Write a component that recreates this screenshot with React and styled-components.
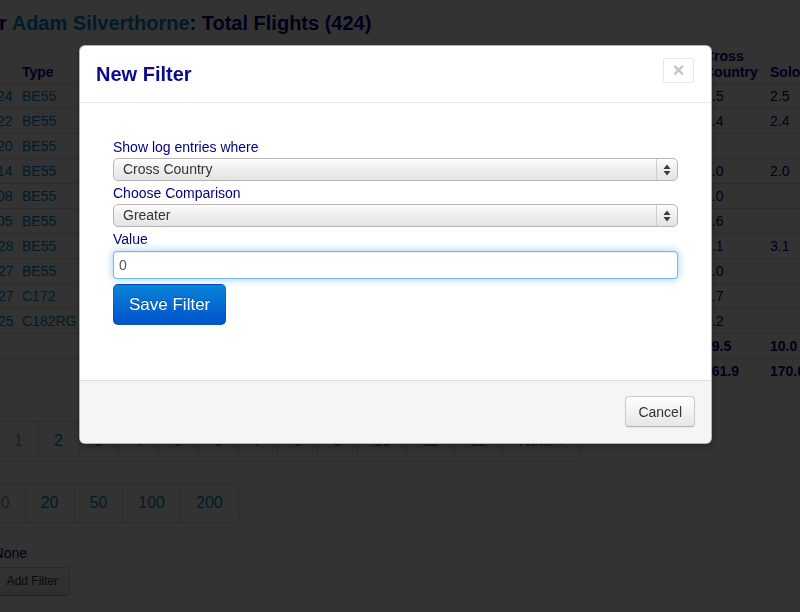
import React from "react";
import styled, { createGlobalStyle } from "styled-components";

const flights = [
  { date: "2013-11-24", type: "BE55", tail: "N4417J", route: "KCRQ KIPL KCRQ", total: "2.5", xc: "2.5", solo: "2.5" },
  { date: "2013-11-22", type: "BE55", tail: "N4417J", route: "KCRQ KTRM KCRQ", total: "2.4", xc: "2.4", solo: "2.4" },
  { date: "2013-11-20", type: "BE55", tail: "N4417J", route: "KCRQ", total: "1.3", xc: "", solo: "" },
  { date: "2013-11-14", type: "BE55", tail: "N4417J", route: "KCRQ KBLH KCRQ", total: "2.0", xc: "2.0", solo: "2.0" },
  { date: "2013-11-08", type: "BE55", tail: "N4417J", route: "KCRQ KSBD", total: "1.0", xc: "1.0", solo: "" },
  { date: "2013-11-05", type: "BE55", tail: "N4417J", route: "KCRQ KIPL KCRQ", total: "1.6", xc: "1.6", solo: "" },
  { date: "2013-10-28", type: "BE55", tail: "N4417J", route: "KCRQ KPSP KCRQ", total: "3.1", xc: "3.1", solo: "3.1" },
  { date: "2013-10-27", type: "BE55", tail: "N4417J", route: "KCRQ KSEE", total: "1.0", xc: "1.0", solo: "" },
  { date: "2013-10-27", type: "C172", tail: "N52233", route: "KSEE KRNM", total: "0.7", xc: "0.7", solo: "" },
  { date: "2013-10-25", type: "C182RG", tail: "N9398R", route: "KCRQ KOKB", total: "1.2", xc: "1.2", solo: "" },
];

const colWidths = [80, 70, 84, 230, 70, 70, 70, 88, 66, 66];

export default function App() {
  return (
    <>
      <GlobalStyle />
      <Page>
        <Heading>
          Log for <Link>Adam Silverthorne</Link>: Total Flights (424)
        </Heading>

        <Table>
          <colgroup>
            {colWidths.map((w, i) => (
              <col key={i} style={{ width: w }} />
            ))}
          </colgroup>
          <thead>
            <tr>
              <Th>Date</Th>
              <Th>Type</Th>
              <Th>Tail</Th>
              <Th>Route</Th>
              <Th>Total</Th>
              <Th>PIC</Th>
              <Th>Dual</Th>
              <Th>Night</Th>
              <Th>Cross Country</Th>
              <Th>Solo</Th>
            </tr>
          </thead>
          <tbody>
            {flights.map((f, i) => (
              <tr key={i}>
                <Td><Link>{f.date}</Link></Td>
                <Td><Link>{f.type}</Link></Td>
                <Td>{f.tail}</Td>
                <Td>{f.route}</Td>
                <Td>{f.total}</Td>
                <Td>{f.total}</Td>
                <Td></Td>
                <Td></Td>
                <Td>{f.xc}</Td>
                <Td>{f.solo}</Td>
              </tr>
            ))}
            <tr>
              <Td colSpan={4}></Td>
              <Td $bold>18.8</Td>
              <Td $bold>18.8</Td>
              <Td $bold></Td>
              <Td $bold></Td>
              <Td $bold>29.5</Td>
              <Td $bold>10.0</Td>
            </tr>
            <tr>
              <Td colSpan={4}></Td>
              <Td $bold>512.4</Td>
              <Td $bold>388.2</Td>
              <Td $bold>124.2</Td>
              <Td $bold>31.6</Td>
              <Td $bold>161.9</Td>
              <Td $bold>170.0</Td>
            </tr>
          </tbody>
        </Table>

        <Pager $top={37} $height={41}>
          <PagerItem $disabled>First</PagerItem>
          <PagerItem $disabled>1</PagerItem>
          {[2, 3, 4, 5, 6, 7, 8, 9, 10, 11, 12].map(n => (
            <PagerItem key={n}>{n}</PagerItem>
          ))}
          <PagerItem>Next »</PagerItem>
        </Pager>

        <Pager $top={22} $height={39}>
          {[5, 10, 20, 50, 100, 200].map(n => (
            <PagerItem key={n} $disabled={n === 10}>{n}</PagerItem>
          ))}
        </Pager>

        <FilterLine>Filter by: None</FilterLine>
        <ButtonRow>
          <SmallButton>Clear</SmallButton>
          <SmallButton>Add Filter</SmallButton>
        </ButtonRow>
      </Page>

      <Backdrop />

      <Modal>
        <ModalHeader>
          <ModalTitle>New Filter</ModalTitle>
          <CloseButton>×</CloseButton>
        </ModalHeader>
        <ModalBody>
          <Label>Show log entries where</Label>
          <Select>
            <SelectValue>Cross Country</SelectValue>
            <SelectArrows><Arrows /></SelectArrows>
          </Select>
          <Label>Choose Comparison</Label>
          <Select>
            <SelectValue>Greater</SelectValue>
            <SelectArrows><Arrows /></SelectArrows>
          </Select>
          <Label>Value</Label>
          <TextInput defaultValue="0" />
          <PrimaryButton>Save Filter</PrimaryButton>
        </ModalBody>
        <ModalFooter>
          <Button>Cancel</Button>
        </ModalFooter>
      </Modal>
    </>
  );
}

function Arrows() {
  return (
    <svg width="8" height="12" viewBox="0 0 8 12">
      <path d="M4 0.5 L7.5 5 L0.5 5 Z" fill="#3a3a3a" />
      <path d="M4 11.5 L7.5 7 L0.5 7 Z" fill="#3a3a3a" />
    </svg>
  );
}

//styles
const GlobalStyle = createGlobalStyle`
  * { box-sizing: border-box; }
  body {
    margin: 0;
    overflow: hidden;
    background: #fff;
    color: #000080;
    font-family: "Liberation Sans", Arial, sans-serif;
    font-size: 14px;
  }
`;

const Page = styled.div`
  margin-left: -64px;
  width: 900px;
`;

const Heading = styled.h2`
  margin: 0;
  padding-top: 8px;
  padding-left: 2px;
  font-size: 20px;
  line-height: 30px;
  font-weight: bold;
  white-space: nowrap;
`;

const Link = styled.a`
  color: #0088cc;
  text-decoration: none;
`;

const Table = styled.table`
  margin-top: 8px;
  border-collapse: collapse;
  table-layout: fixed;
  width: 894px;
`;

const Th = styled.th`
  text-align: left;
  vertical-align: bottom;
  padding: 2px 6px 3px;
  line-height: 16px;
  font-weight: bold;
`;

const Td = styled.td`
  padding: 2px 6px;
  height: 25px;
  line-height: 20px;
  border-top: 1px solid #ddd;
  white-space: nowrap;
  overflow: hidden;
  font-weight: ${p => (p.$bold ? "bold" : "normal")};
`;

const Pager = styled.div`
  display: inline-flex;
  margin-top: ${p => p.$top}px;
  height: ${p => p.$height}px;
  border: 1px solid #ddd;
  border-radius: 4px;
  font-size: 16px;
  vertical-align: top;
`;

const PagerItem = styled.span`
  display: flex;
  align-items: center;
  padding: 0 15px;
  border-left: 1px solid #ddd;
  color: ${p => (p.$disabled ? "#999" : "#0088cc")};
  white-space: nowrap;

  &:first-child {
    border-left: none;
  }
`;

const FilterLine = styled.div`
  margin-top: 20px;
  line-height: 20px;
`;

const ButtonRow = styled.div`
  display: flex;
  gap: 6px;
  margin-top: 4px;
`;

const SmallButton = styled.button`
  height: 29px;
  padding: 0 11px;
  font-family: inherit;
  font-size: 12px;
  color: #333;
  background: linear-gradient(#fff, #e6e6e6);
  border: 1px solid #ccc;
  border-bottom-color: #b3b3b3;
  border-radius: 4px;
`;

const Backdrop = styled.div`
  position: fixed;
  inset: 0;
  background: rgba(0, 0, 0, 0.8);
  z-index: 5;
`;

const Modal = styled.div`
  position: fixed;
  top: 45px;
  left: 79px;
  width: 633px;
  background: #fff;
  border: 1px solid rgba(0, 0, 0, 0.3);
  border-radius: 6px;
  box-shadow: 0 3px 7px rgba(0, 0, 0, 0.3);
  overflow: hidden;
  z-index: 10;
`;

const ModalHeader = styled.div`
  display: flex;
  justify-content: space-between;
  align-items: center;
  height: 57px;
  padding: 0 17px 0 16px;
  border-bottom: 1px solid #e8e8e8;
`;

const ModalTitle = styled.h3`
  margin: 0;
  font-size: 20px;
  line-height: 28px;
  font-weight: bold;
  color: #0a0a8c;
`;

const CloseButton = styled.button`
  align-self: flex-start;
  margin-top: 12px;
  width: 31px;
  height: 25px;
  padding: 0;
  font-family: inherit;
  font-size: 20px;
  font-weight: bold;
  line-height: 23px;
  color: #c4c4c4;
  background: #fff;
  border: 1px solid #e6e6e6;
  border-radius: 2px;
`;

const ModalBody = styled.div`
  display: flex;
  flex-direction: column;
  align-items: flex-start;
  padding: 34px 33px 55px;
`;

const Label = styled.label`
  display: block;
  line-height: 20px;
  margin-top: 2px;
  margin-bottom: 1px;
  color: #000080;

  &:first-child {
    margin-top: 0;
  }
`;

const Select = styled.div`
  display: flex;
  align-self: stretch;
  height: 23px;
  border: 1px solid #b5b5b5;
  border-radius: 5px;
  background: linear-gradient(#fdfdfd, #efefef 45%, #e4e4e4);
  box-shadow: inset 0 1px 0 rgba(255, 255, 255, 0.9);
  color: #333;
  font-size: 14px;
`;

const SelectValue = styled.div`
  flex: 1;
  padding-left: 9px;
  line-height: 21px;
`;

const SelectArrows = styled.div`
  display: flex;
  align-items: center;
  justify-content: center;
  width: 21px;
  border-left: 1px solid #cdcdcd;
`;

const TextInput = styled.input`
  align-self: stretch;
  height: 28px;
  margin-top: 1px;
  padding: 4px 5px;
  font-family: inherit;
  font-size: 14px;
  color: #555;
  border: 1px solid rgba(82, 168, 236, 0.8);
  border-radius: 4px;
  outline: none;
  box-shadow: inset 0 1px 1px rgba(0, 0, 0, 0.075), 0 0 8px rgba(82, 168, 236, 0.6);
`;

const PrimaryButton = styled.button`
  margin-top: 5px;
  height: 41px;
  padding: 0 15px;
  font-family: inherit;
  font-size: 17px;
  color: #fff;
  background: linear-gradient(#0a84d8, #0052cc);
  border: 1px solid;
  border-color: rgba(0, 0, 0, 0.1) rgba(0, 0, 0, 0.1) rgba(0, 0, 0, 0.25);
  border-radius: 5px;
  text-shadow: 0 -1px 0 rgba(0, 0, 0, 0.25);
`;

const ModalFooter = styled.div`
  display: flex;
  justify-content: flex-end;
  padding: 15px 16px 16px;
  background: #f5f5f5;
  border-top: 1px solid #ddd;
`;

const Button = styled.button`
  height: 31px;
  padding: 0 12px;
  font-family: inherit;
  font-size: 14px;
  color: #333;
  background: linear-gradient(#fff, #e6e6e6);
  border: 1px solid #ccc;
  border-bottom-color: #b3b3b3;
  border-radius: 4px;
  box-shadow: inset 0 1px 0 rgba(255, 255, 255, 0.2), 0 1px 2px rgba(0, 0, 0, 0.05);
`;
